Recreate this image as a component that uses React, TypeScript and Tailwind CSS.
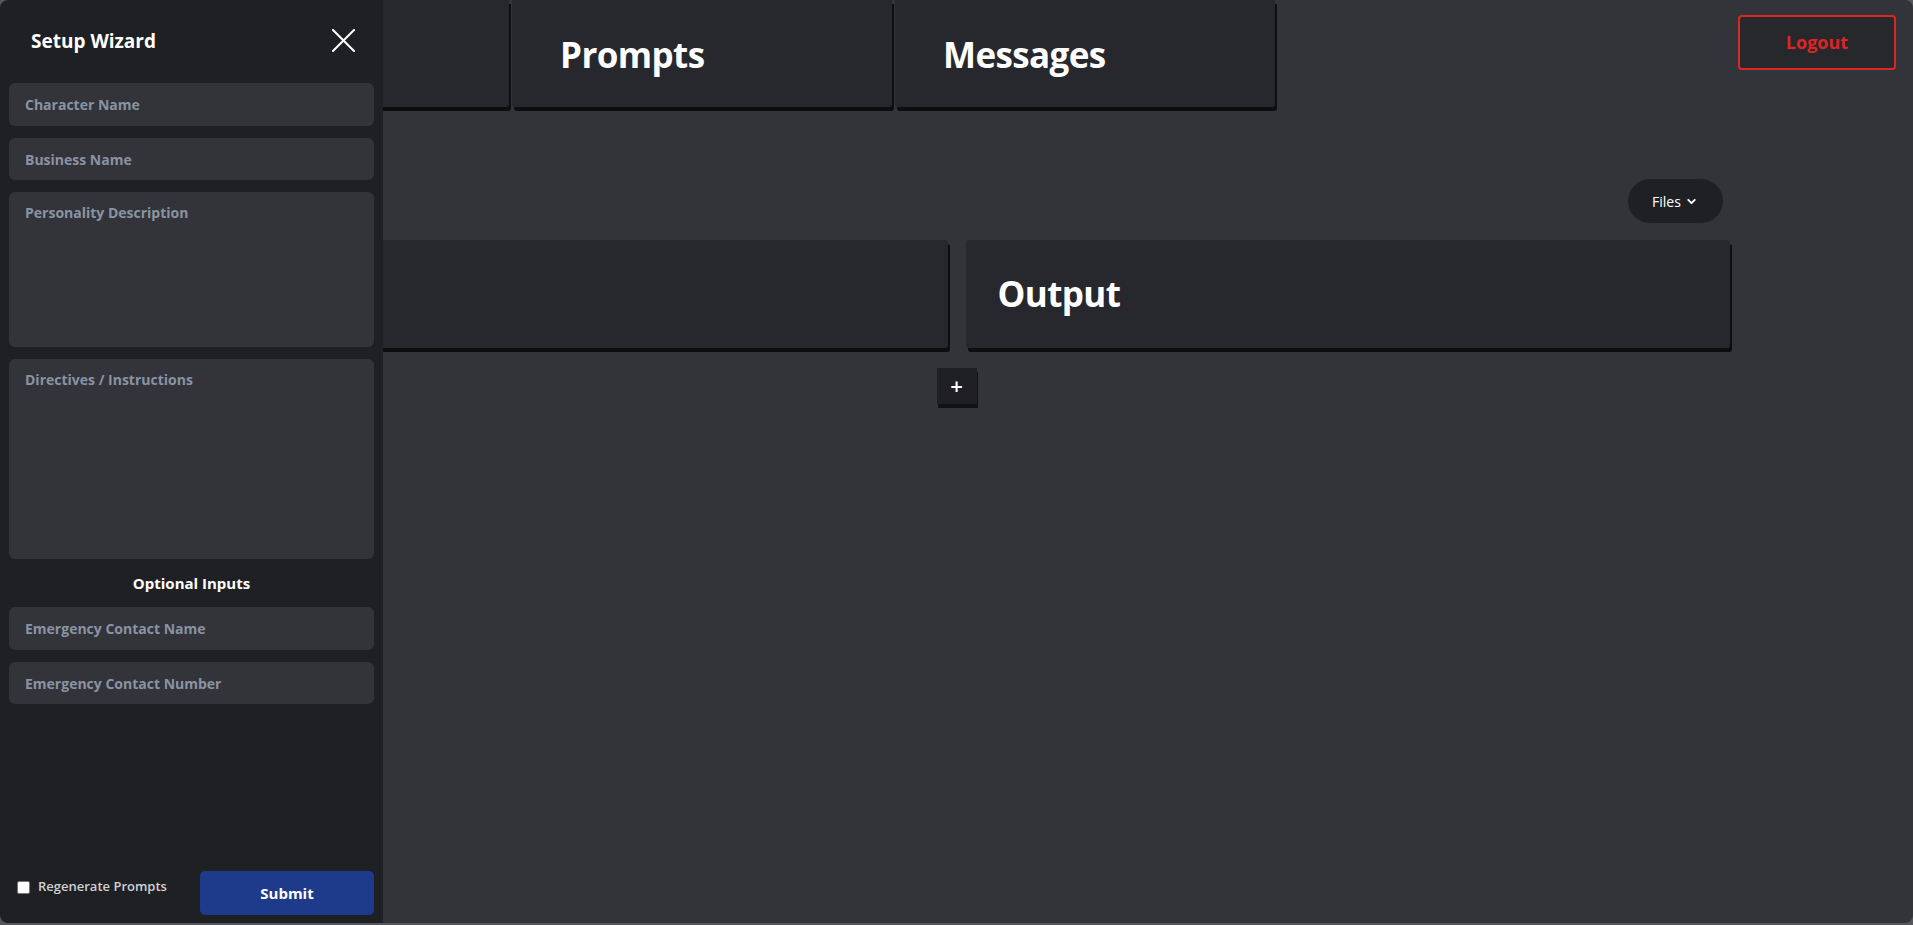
import React from "react";
import { ChevronDown } from "lucide-react";

const font = { fontFamily: '"Open Sans", "Noto Sans", sans-serif' };

const field =
  "rounded-[6px] bg-[#333439] pl-4 text-[14px] font-bold text-white placeholder:text-[#8a93a3] outline-none";

function Tab({ label }: { label?: string }) {
  return (
    <div className="w-[380px] h-[107px] bg-[#27282d] rounded-b-[3px] shadow-[2px_4px_0_0_#0d0e10] flex items-center pl-12 pt-1">
      {label && <span className="text-white text-[35px] font-bold tracking-[-0.6px]">{label}</span>}
    </div>
  );
}

export default function App() {
  return (
    <div className="w-full h-[925px] bg-[#56575b]" style={font}>
      <div className="relative h-[923px] rounded-lg bg-[#333439] overflow-hidden">
        {/* main content */}
        <div className="flex flex-col h-full">
          <div className="flex items-start">
            <div className="flex gap-[3px] ml-[129px]">
              <Tab label="Setup" />
              <Tab label="Prompts" />
              <Tab label="Messages" />
            </div>
            <button className="ml-auto mt-[15px] mr-[17px] w-[158px] h-[55px] border-2 border-[#dc2626] rounded-[4px] bg-[#27282c] text-[#dc2626] font-bold text-[18px]">
              Logout
            </button>
          </div>

          <div className="w-[1546px] mx-auto flex flex-col">
            <div className="flex justify-end mt-[72px]">
              <button className="mr-[7px] w-[95px] h-[44px] rounded-full bg-[#1f2024] text-white text-[14px] flex items-center justify-center gap-[4px]">
                <span>Files</span>
                <ChevronDown size={13} strokeWidth={3.5} />
              </button>
            </div>
            <div className="grid grid-cols-2 gap-[18px] mt-[17px]">
              <div className="h-[108px] bg-[#27282d] rounded-[3px] shadow-[2px_4px_0_0_#0d0e10]" />
              <div className="h-[108px] bg-[#27282d] rounded-[3px] shadow-[2px_4px_0_0_#0d0e10] flex items-center pl-8">
                <span className="text-white text-[35px] font-bold tracking-[-0.6px]">Output</span>
              </div>
            </div>
            <button className="mx-auto mt-[20px] w-[40px] h-[36px] bg-[#1f2024] shadow-[1px_4px_0_0_#111214] text-white text-[22px] font-semibold leading-none flex items-center justify-center pb-[2px]">
              +
            </button>
          </div>
        </div>

        {/* sidebar overlay */}
        <aside className="absolute left-0 top-0 bottom-0 w-[383px] bg-[#1f2024] rounded-l-lg flex flex-col px-[9px] pb-[8px]">
          <div className="h-[83px] flex items-center justify-between pl-[22px] pr-[19px] shrink-0">
            <h2 className="text-white text-[19px] font-bold">Setup Wizard</h2>
            <svg width="23" height="23" viewBox="0 0 23 23" className="mt-[-2px]">
              <path d="M1 1 L22 22 M22 1 L1 22" stroke="white" strokeWidth="2" strokeLinecap="square" fill="none" />
            </svg>
          </div>
          <div className="flex flex-col gap-[12px]">
            <input placeholder="Character Name" className={`h-[43px] ${field}`} />
            <input placeholder="Business Name" className={`h-[42px] ${field}`} />
            <textarea
              placeholder="Personality Description"
              className={`h-[155px] resize-none pt-[10px] ${field}`}
            />
            <textarea
              placeholder="Directives / Instructions"
              className={`h-[200px] resize-none pt-[10px] ${field}`}
            />
            <div className="h-[24px] flex items-center justify-center text-white text-[15px] font-bold">
              Optional Inputs
            </div>
            <input placeholder="Emergency Contact Name" className={`h-[43px] ${field}`} />
            <input placeholder="Emergency Contact Number" className={`h-[42px] ${field}`} />
          </div>
          <div className="mt-auto flex items-center">
            <label className="flex items-center gap-[8px] pl-[8px] mt-[-12px]">
              <span className="w-[13px] h-[13px] rounded-[2px] bg-white border border-[#767676] inline-block" />
              <span className="text-[#d1d1d4] text-[13px] font-semibold">Regenerate Prompts</span>
            </label>
            <button className="ml-auto w-[174px] h-[44px] rounded-[5px] bg-[#1e3a8a] text-white text-[15px] font-bold">
              Submit
            </button>
          </div>
        </aside>
      </div>
    </div>
  );
}
